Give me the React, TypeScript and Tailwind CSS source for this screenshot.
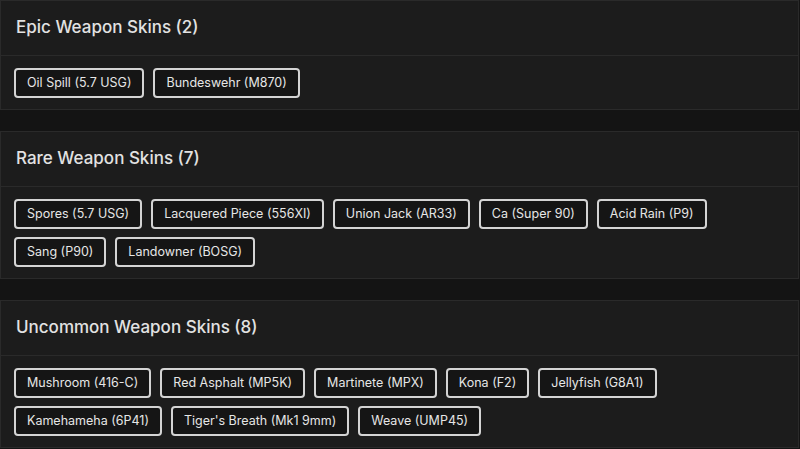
const sections = [
  {
    title: "Epic Weapon Skins (2)",
    skins: ["Oil Spill (5.7 USG)", "Bundeswehr (M870)"],
  },
  {
    title: "Rare Weapon Skins (7)",
    skins: [
      "Spores (5.7 USG)",
      "Lacquered Piece (556XI)",
      "Union Jack (AR33)",
      "Ca (Super 90)",
      "Acid Rain (P9)",
      "Sang (P90)",
      "Landowner (BOSG)",
    ],
  },
  {
    title: "Uncommon Weapon Skins (8)",
    skins: [
      "Mushroom (416-C)",
      "Red Asphalt (MP5K)",
      "Martinete (MPX)",
      "Kona (F2)",
      "Jellyfish (G8A1)",
      "Kamehameha (6P41)",
      "Tiger's Breath (Mk1 9mm)",
      "Weave (UMP45)",
    ],
  },
];

function SkinSection({ title, skins }: { title: string; skins: string[] }) {
  return (
    <section className="mb-[21px] border border-[#2a2a2a] bg-[#1c1c1c]">
      <header className="flex h-[55px] items-center border-b border-[#2a2a2a] px-[15px]">
        <h2 className="text-[17px] font-medium text-[#e2e2e2]">{title}</h2>
      </header>
      <div className="flex flex-wrap gap-x-[9px] gap-y-[8px] px-[13px] pt-[12px] pb-[11px]">
        {skins.map((skin) => (
          <span
            key={skin}
            className="flex h-[30px] items-center rounded-[4px] border-2 border-[#d4d4d4] bg-[#151515] px-[11px] text-[12.5px] text-[#e6e6e6]"
          >
            {skin}
          </span>
        ))}
      </div>
    </section>
  );
}

export default function App() {
  return (
    <main
      className="min-h-screen bg-[#141414] pr-px"
      style={{ fontFamily: "Inter, 'Noto Sans', sans-serif" }}
    >
      {sections.map((s) => (
        <SkinSection key={s.title} title={s.title} skins={s.skins} />
      ))}
    </main>
  );
}
